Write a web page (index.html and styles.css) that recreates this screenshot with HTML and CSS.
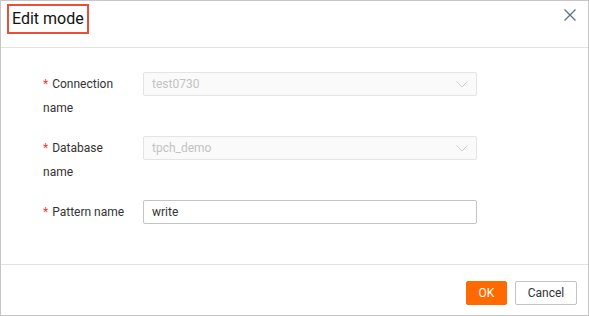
FILE: index.html
```html
<!DOCTYPE html>
<html lang="en">
<head>
  <meta charset="UTF-8">
  <meta name="viewport" content="width=device-width, initial-scale=1.0">
  <link rel="stylesheet" href="styles.css">
  <title>Edit mode</title>
</head>
<body>
  <div class="dialog">
    <div class="dialog-header">
      <h2 class="dialog-title">Edit mode</h2>
      <button class="close-btn" aria-label="Close">
        <svg width="12" height="12" viewBox="0 0 12 12">
          <path d="M0.5 0.5 L11.5 11.5 M11.5 0.5 L0.5 11.5" stroke="#5f7089" stroke-width="1.3" fill="none"/>
        </svg>
      </button>
    </div>

    <div class="dialog-body">
      <div class="form-row">
        <label class="form-label required">Connection name</label>
        <div class="select disabled">
          <span>test0730</span>
          <svg width="12" height="7" viewBox="0 0 12 7">
            <path d="M0.5 0.5 L6 6 L11.5 0.5" stroke="#cfcfcf" stroke-width="1" fill="none"/>
          </svg>
        </div>
      </div>

      <div class="form-row">
        <label class="form-label required">Database name</label>
        <div class="select disabled">
          <span>tpch_demo</span>
          <svg width="12" height="7" viewBox="0 0 12 7">
            <path d="M0.5 0.5 L6 6 L11.5 0.5" stroke="#cfcfcf" stroke-width="1" fill="none"/>
          </svg>
        </div>
      </div>

      <div class="form-row">
        <label class="form-label required">Pattern name</label>
        <input class="text-input" type="text" value="write">
      </div>
    </div>

    <div class="dialog-footer">
      <button class="btn btn-primary">OK</button>
      <button class="btn btn-default">Cancel</button>
    </div>
  </div>
</body>
</html>
```

FILE: styles.css
```css
body {
  margin: 0;
  font-family: Roboto, "Liberation Sans", Arial, sans-serif;
  background-color: #fff;
}

.dialog {
  width: 589px;
  height: 316px;
  box-sizing: border-box;
  border: 1px solid #c6c6c6;
  background-color: #fff;
  display: flex;
  flex-direction: column;
}

.dialog-header {
  height: 47px;
  box-sizing: border-box;
  border-bottom: 1px solid #e3e3e3;
  display: flex;
  align-items: flex-start;
  justify-content: space-between;
  padding: 3px 12px 0 6px;
}

.dialog-title {
  margin: 0;
  font-size: 16px;
  font-weight: normal;
  color: #111;
  height: 30px;
  line-height: 26px;
  padding: 0 3px 0 3px;
  box-sizing: border-box;
  border: 2px solid #e9503b;
}

.close-btn {
  background: none;
  border: none;
  padding: 0;
  margin-top: 5px;
  cursor: pointer;
  line-height: 0;
}

.dialog-body {
  flex: 1;
  padding: 24px 0 0 40px;
}

.form-row {
  display: flex;
  align-items: flex-start;
  margin-bottom: 16px;
}

.form-label {
  width: 84px;
  margin-right: 16px;
  font-size: 12px;
  line-height: 24px;
  color: #333;
  padding-left: 2px;
}

.form-label.required::before {
  content: "*";
  color: #f04134;
  margin-right: 4px;
}

.select,
.text-input {
  width: 334px;
  height: 24px;
  box-sizing: border-box;
  font-family: inherit;
  font-size: 12px;
}

.select {
  display: flex;
  align-items: center;
  justify-content: space-between;
  padding: 0 8px 0 8px;
  border: 1px solid #e4e4e4;
  border-radius: 2px;
}

.select.disabled {
  background-color: #fafafa;
  color: #c2c2c2;
}

.text-input {
  border: 1px solid #c4c4c4;
  border-radius: 2px;
  padding: 0 8px;
  color: #333;
  outline: none;
}

.dialog-footer {
  height: 51px;
  box-sizing: border-box;
  border-top: 1px solid #e3e3e3;
  display: flex;
  justify-content: flex-end;
  align-items: flex-start;
  gap: 8px;
  padding: 16px 11px 0 0;
}

.btn {
  height: 24px;
  box-sizing: border-box;
  font-family: inherit;
  font-size: 12px;
  border-radius: 2px;
  cursor: pointer;
  padding: 0;
}

.btn-primary {
  width: 41px;
  background-color: #ff6a00;
  border: 1px solid #ff6a00;
  color: #fff;
}

.btn-default {
  width: 62px;
  background-color: #fff;
  border: 1px solid #c4c4c4;
  color: #333;
}
```
